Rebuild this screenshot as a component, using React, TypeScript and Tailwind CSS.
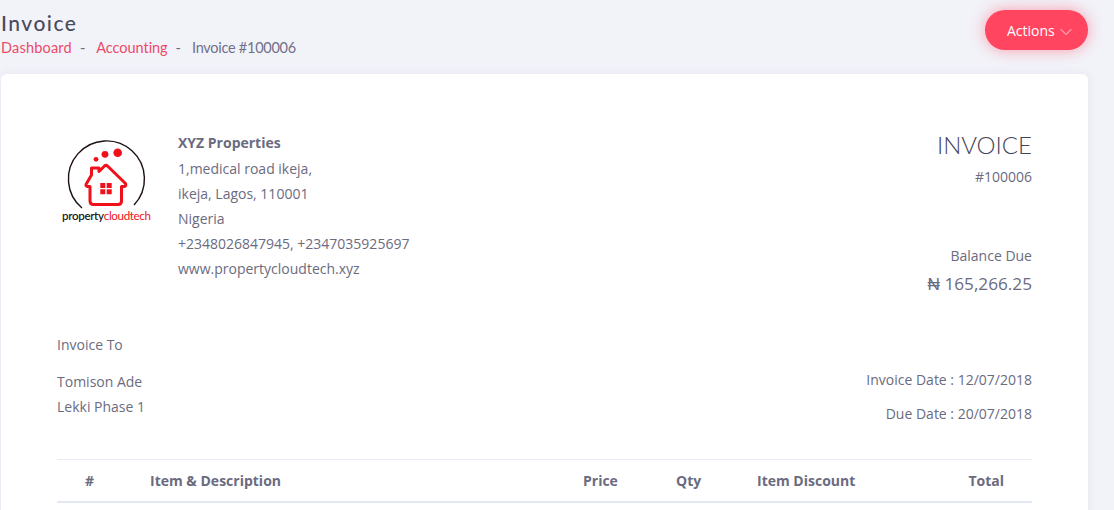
import { ChevronDown } from "lucide-react";

function Logo() {
  return (
    <div className="relative h-[85px] w-[100px]">
      <svg width="100" height="85" viewBox="0 0 100 85" className="block">
        <path d="M25 69 A38 38 0 1 1 77 66" fill="none" stroke="#1c1012" strokeWidth="1.4" />
        <circle cx="60.7" cy="13.7" r="4.3" fill="#f0101a" />
        <circle cx="48" cy="15.3" r="3.4" fill="#f0101a" />
        <circle cx="39" cy="20.3" r="2.4" fill="#f0101a" />
        <path
          d="M34.5 36 V29 H42 V32.5 L47.5 27 Q49 25.7 50.5 27 L68.5 44.5 Q69.5 47 67 47.5 H64.5 V62 Q64.5 65.5 61 65.5 H36.5 Q33 65.5 33 62 V47.5 H30.5 Q28 47 29.5 44.5 Z"
          fill="none"
          stroke="#f0101a"
          strokeWidth="3"
          strokeLinejoin="round"
        />
        <path d="M43.3 44 h5 v5 h-5z M49.7 44 h5 v5 h-5z M43.3 50.3 h5 v5 h-5z M49.7 50.3 h5 v5 h-5z" fill="#f0101a" />
      </svg>
      <p className="absolute left-[5px] top-[70px] whitespace-nowrap font-['Lato',sans-serif] text-[11.6px] leading-[14px] tracking-[-0.35px]">
        <span className="font-semibold text-[#221a24]">property</span>
        <span className="text-[#f0101a]">cloudtech</span>
      </p>
    </div>
  );
}

export default function App() {
  return (
    <div className="h-[510px] w-[1114px] overflow-hidden bg-[#f2f3f9] pl-px font-['Open_Sans',sans-serif] text-[14px] text-[#6b6b80]">
      <div className="flex h-[74px] w-[1087px] items-start justify-between">
        <div>
          <h1 className="pt-[10px] font-['Lato',sans-serif] text-[21px] font-medium leading-[25px] tracking-[1.5px] text-[#4a4a5c]">
            Invoice
          </h1>
          <p className="mt-[2px] flex font-['Lato',sans-serif] text-[14.5px] leading-[22px]">
            <span className="tracking-[0.2px] text-[#ec4a68]">Dashboard</span>
            <span className="mx-[8px]">-</span>
            <span className="ml-[3px] tracking-[-0.05px] text-[#ec4a68]">Accounting</span>
            <span className="mx-[8px]">-</span>
            <span className="ml-[3px] tracking-[-0.27px] text-[#707089]">Invoice #100006</span>
          </p>
        </div>
        <button className="mt-[10px] flex h-[40px] w-[103px] items-center justify-start gap-[1px] rounded-[20px] bg-[#ff455f] pl-[22px] text-[14px] text-white shadow-[0_0_15px_rgba(255,69,95,0.5)]">
          Actions
          <ChevronDown size={20} strokeWidth={1} className="mt-[4px]" />
        </button>
      </div>

      <div className="h-[500px] w-[1087px] rounded-[6px] bg-white px-[56px] pt-[56px] shadow-[0_0_8px_rgba(180,180,205,0.2)]">
        <div className="flex justify-between">
          <div className="flex">
            <div className="w-[121px] pt-[9px]">
              <Logo />
            </div>
            <div className="pt-[0.4px] leading-[25.2px]">
              <p className="font-bold">XYZ Properties</p>
              <p>1,medical road ikeja,</p>
              <p>ikeja, Lagos, 110001</p>
              <p>Nigeria</p>
              <p>+2348026847945, +2347035925697</p>
              <p>www.propertycloudtech.xyz</p>
            </div>
          </div>
          <div className="text-right">
            <h2 className="font-['Lato',sans-serif] text-[24px] font-light leading-[30px] text-[#45455a]">INVOICE</h2>
            <p className="mt-[7px] leading-[20px]">#100006</p>
            <p className="mt-[59px] leading-[20px]">Balance Due</p>
            <p className="mt-[6px] text-[17.2px] leading-[24px]">₦ 165,266.25</p>
          </div>
        </div>

        <div className="mt-[39px] flex items-start justify-between">
          <div>
            <p className="leading-[20px]">Invoice To</p>
            <p className="mt-[14px] leading-[25px]">Tomison Ade</p>
            <p className="leading-[25px]">Lekki Phase 1</p>
          </div>
          <div className="pt-[35px] text-right">
            <p className="leading-[20px]">Invoice Date : 12/07/2018</p>
            <p className="mt-[14px] leading-[20px]">Due Date : 20/07/2018</p>
          </div>
        </div>

        <table className="mt-[35px] w-full table-fixed border-t border-[#e8ebf3] text-left font-bold">
          <thead>
            <tr className="h-[42px] border-b-2 border-[#e3e9f2]">
              <th className="w-[93px] pl-[28px]">#</th>
              <th className="w-[433px]">Item &amp; Description</th>
              <th className="w-[93px]">Price</th>
              <th className="w-[81px]">Qty</th>
              <th className="w-[200px]">Item Discount</th>
              <th className="pr-[28px] text-right">Total</th>
            </tr>
          </thead>
        </table>
      </div>
    </div>
  );
}
